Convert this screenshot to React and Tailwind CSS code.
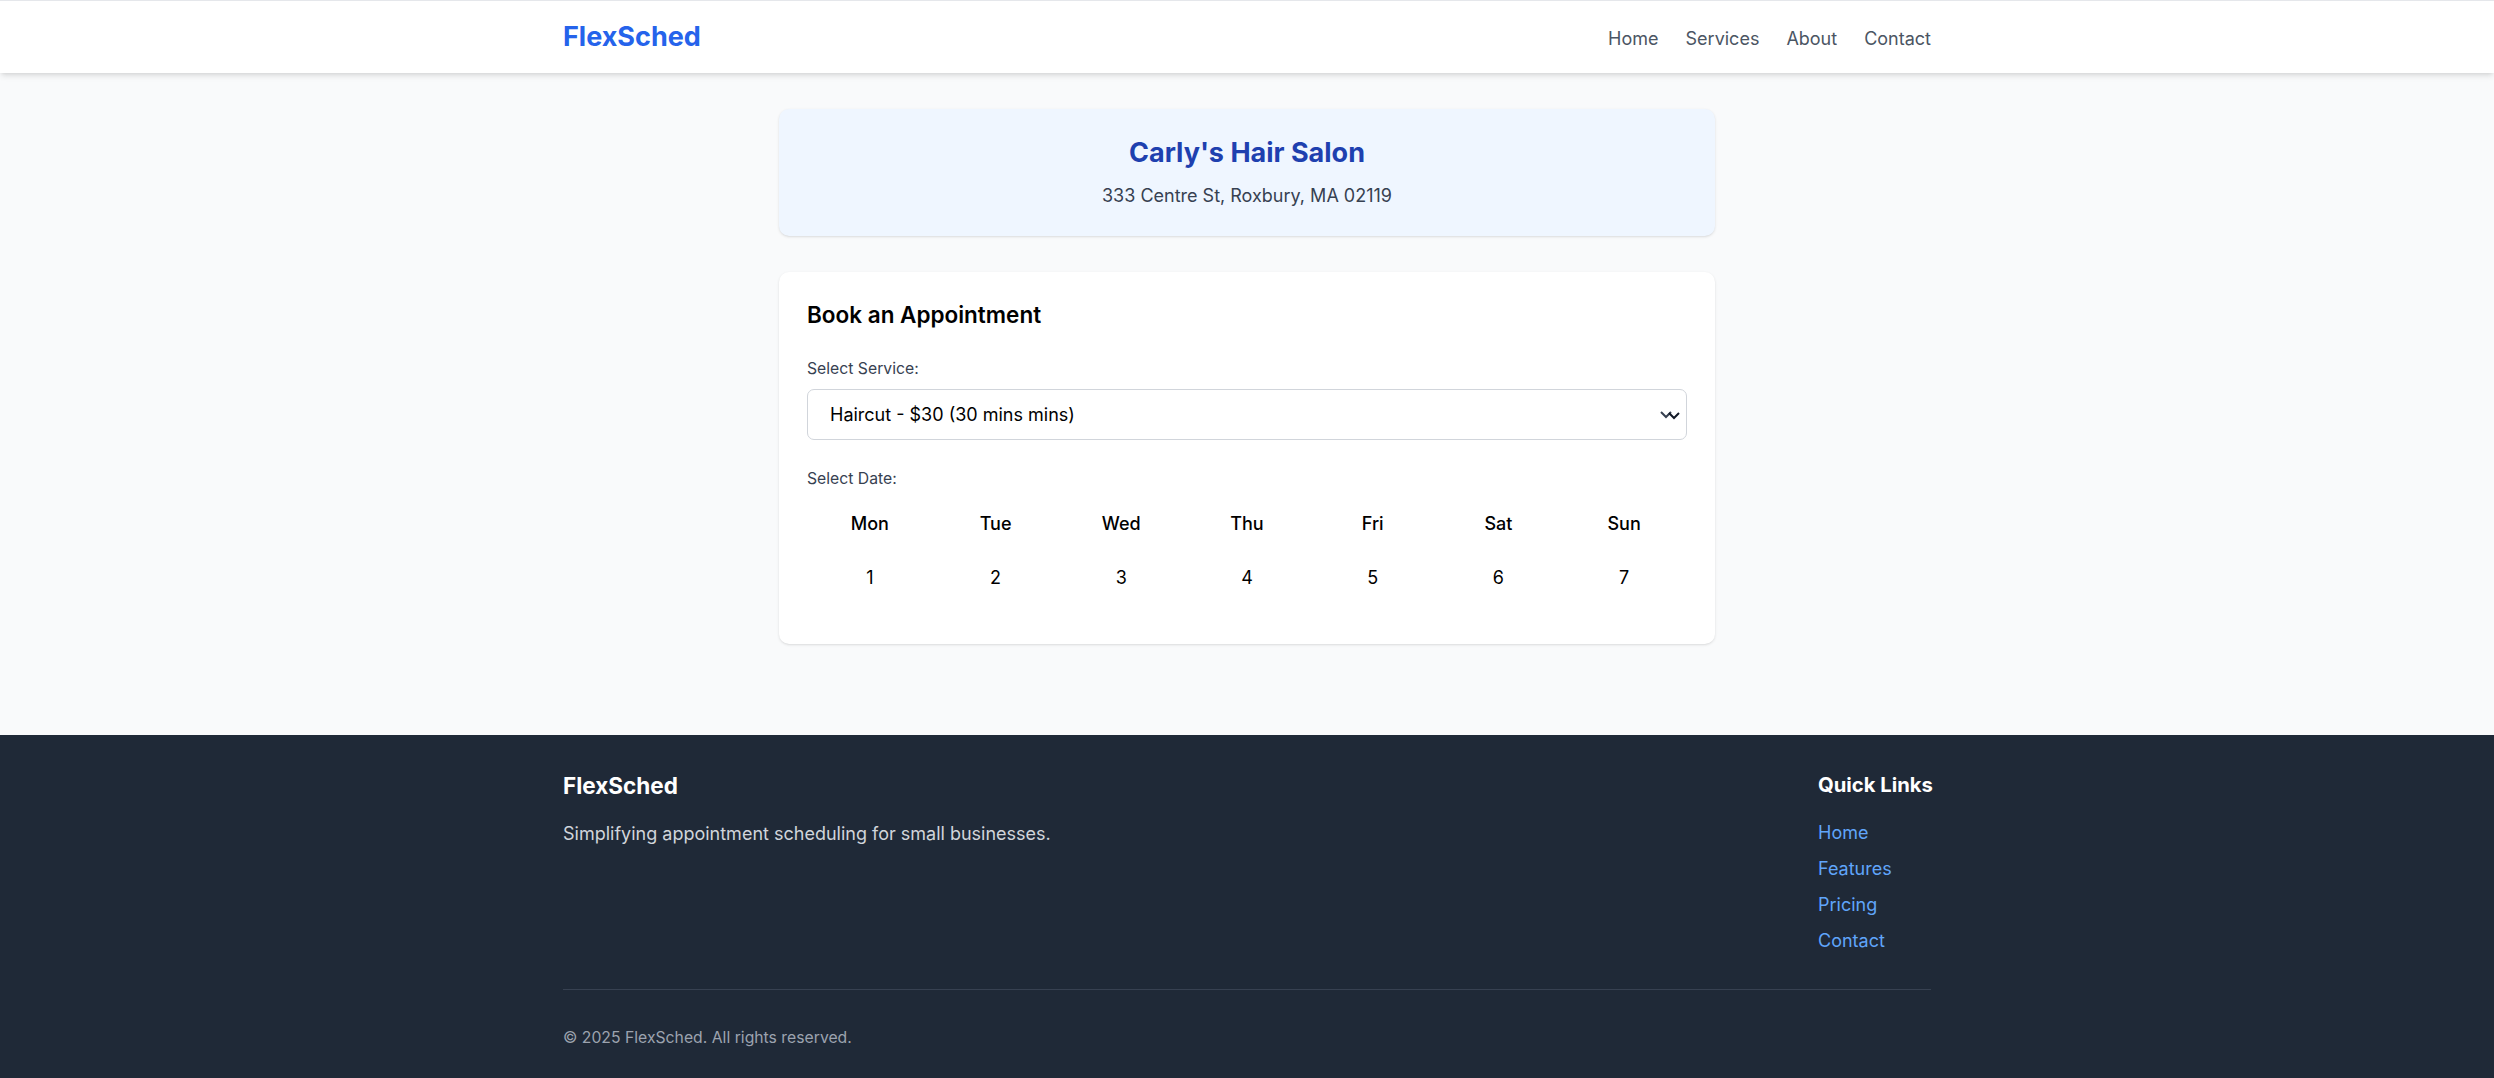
import { useState } from "react";

const days = ["Mon", "Tue", "Wed", "Thu", "Fri", "Sat", "Sun"];
const dates = [1, 2, 3, 4, 5, 6, 7];
const navLinks = ["Home", "Services", "About", "Contact"];
const quickLinks = ["Home", "Features", "Pricing", "Contact"];

const Chevrons = () => (
  <svg width="22" height="10" viewBox="0 0 22 10" fill="none">
    <polyline points="1,2 6,7 11,2" stroke="#374151" strokeWidth="2" />
    <polyline points="9,3 14,8 19,3" stroke="#111827" strokeWidth="2" />
  </svg>
);

const App = () => {
  const [service] = useState("Haircut - $30 (30 mins mins)");

  return (
    <div className="min-h-screen flex flex-col bg-[#f9fafb] font-['Inter','Liberation_Sans',sans-serif]">
      {/* nav */}
      <nav className="bg-white border-t border-[#e5e7eb] shadow-md relative z-10">
        <div className="w-[1368px] mx-auto h-[72px] flex items-center justify-between">
          <span className="text-[27px] leading-[36px] font-bold text-[#2563eb]">FlexSched</span>
          <div className="flex items-center gap-[27px] pt-[2px]">
            {navLinks.map((l) => (
              <a key={l} className="text-[18px] leading-[27px] text-[#4b5563]">
                {l}
              </a>
            ))}
          </div>
        </div>
      </nav>

      {/* main */}
      <main className="flex-1 pt-[36px] pb-[90px]">
        <div className="w-[936px] mx-auto flex flex-col gap-[36px]">
          <div className="bg-[#eff6ff] rounded-[10px] shadow-sm py-[26px] text-center">
            <h1 className="text-[27px] leading-[36px] font-bold text-[#1e40af]">Carly's Hair Salon</h1>
            <p className="mt-[11px] text-[18px] leading-[28px] text-[#374151]">333 Centre St, Roxbury, MA 02119</p>
          </div>

          <div className="bg-white rounded-[10px] shadow-sm px-[28px] pt-[27px] pb-[53px]">
            <h2 className="text-[22.5px] leading-[31px] font-semibold text-black">Book an Appointment</h2>

            <label className="block mt-[27.5px] text-[15.75px] leading-[22.5px] text-[#374151]">Select Service:</label>
            <div className="mt-[9px] h-[51px] border border-[#d1d5db] rounded-[7px] bg-white flex items-center justify-between pl-[22px] pr-[4px]">
              <span className="text-[18px] leading-[27px] text-black">{service}</span>
              <Chevrons />
            </div>

            <label className="block mt-[28px] text-[15.75px] leading-[22.5px] text-[#374151]">Select Date:</label>
            <div className="mt-[19px] grid grid-cols-7">
              {days.map((d) => (
                <div key={d} className="text-center text-[18px] leading-[27px] font-medium text-black">
                  {d}
                </div>
              ))}
            </div>
            <div className="mt-[27px] grid grid-cols-7">
              {dates.map((n) => (
                <div key={n} className="text-center text-[18px] leading-[27px] text-black">
                  {n}
                </div>
              ))}
            </div>
          </div>
        </div>
      </main>

      {/* footer */}
      <footer className="bg-[#1f2937]">
        <div className="w-[1368px] mx-auto pt-[36px] pb-[28px]">
          <div className="flex justify-between">
            <div>
              <h3 className="text-[22.5px] leading-[30px] font-bold text-white">FlexSched</h3>
              <p className="mt-[19px] text-[18px] leading-[28px] text-[#d1d5db]">
                Simplifying appointment scheduling for small businesses.
              </p>
            </div>
            <div className="w-[113px]">
              <h3 className="text-[20.25px] leading-[28px] font-bold text-white whitespace-nowrap">Quick Links</h3>
              <ul className="mt-[20px] flex flex-col gap-[8px]">
                {quickLinks.map((l) => (
                  <li key={l} className="text-[18px] leading-[28px] text-[#60a5fa]">
                    {l}
                  </li>
                ))}
              </ul>
            </div>
          </div>
          <div className="mt-[34px] border-t border-[#374151] pt-[36px]">
            <p className="text-[15.75px] leading-[24px] text-[#9ca3af]">© 2025 FlexSched. All rights reserved.</p>
          </div>
        </div>
      </footer>
    </div>
  );
};

export default App;
